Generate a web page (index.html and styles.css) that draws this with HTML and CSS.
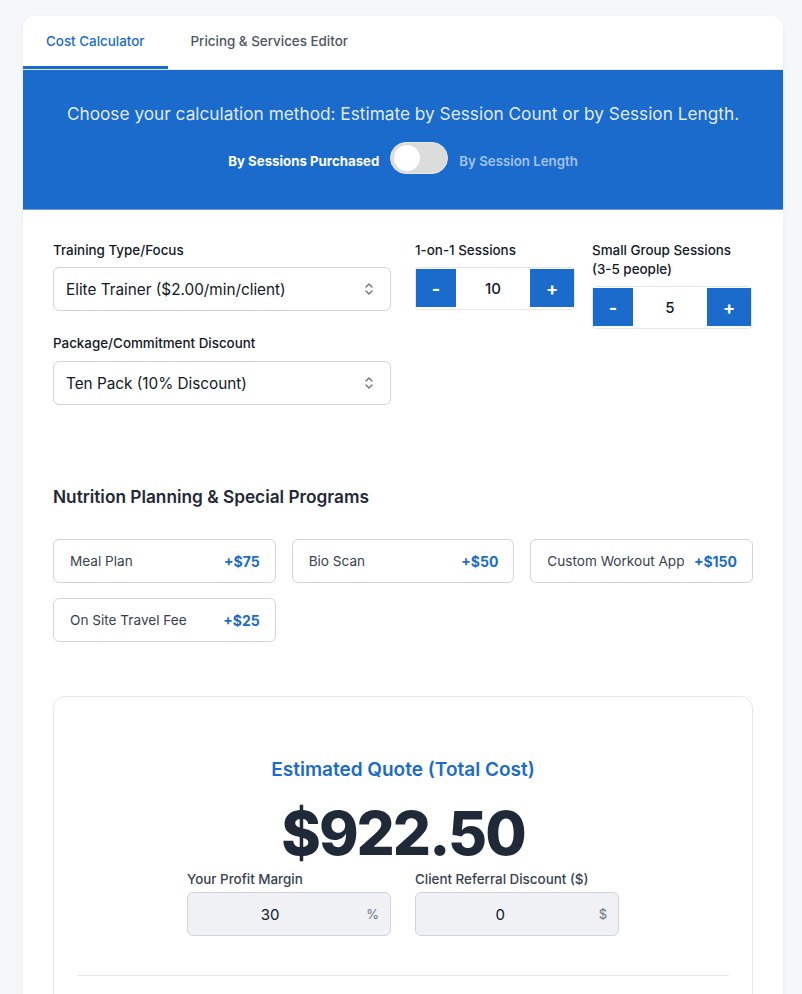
FILE: index.html
```html
<!DOCTYPE html>
<html lang="en">
<head>
    <meta charset="UTF-8">
    <meta name="viewport" content="width=device-width, initial-scale=1.0">
    <title>Cost Calculator</title>
    <link rel="stylesheet" href="styles.css">
</head>
<body>
    <div class="card">
        <!-- tabs -->
        <div class="tabs">
            <button class="tab active">Cost Calculator</button>
            <button class="tab">Pricing &amp; Services Editor</button>
        </div>

        <!-- calculation method banner -->
        <div class="banner">
            <p class="banner-text">Choose your calculation method: Estimate by Session Count or by Session Length.</p>
            <div class="mode-row">
                <span class="mode-label on">By Sessions Purchased</span>
                <span class="switch"><span class="knob"></span></span>
                <span class="mode-label">By Session Length</span>
            </div>
        </div>

        <div class="content">
            <div class="form-row">
                <div class="form-col">
                    <div class="field">
                        <label class="field-label">Training Type/Focus</label>
                        <div class="select-wrap">
                            <select class="select">
                                <option>Elite Trainer ($2.00/min/client)</option>
                            </select>
                            <svg class="chevron" width="10" height="14" viewBox="0 0 10 14" fill="none" stroke="#6b7280" stroke-width="1.4" stroke-linecap="round" stroke-linejoin="round"><path d="M2 5 L5 2 L8 5"/><path d="M2 9 L5 12 L8 9"/></svg>
                        </div>
                    </div>
                    <div class="field">
                        <label class="field-label package-label">Package/Commitment Discount</label>
                        <div class="select-wrap">
                            <select class="select">
                                <option>Ten Pack (10% Discount)</option>
                            </select>
                            <svg class="chevron" width="10" height="14" viewBox="0 0 10 14" fill="none" stroke="#6b7280" stroke-width="1.4" stroke-linecap="round" stroke-linejoin="round"><path d="M2 5 L5 2 L8 5"/><path d="M2 9 L5 12 L8 9"/></svg>
                        </div>
                    </div>
                </div>

                <div class="field stepper-field">
                    <label class="field-label">1-on-1 Sessions</label>
                    <div class="stepper">
                        <button class="step-btn">-</button>
                        <span class="step-value">10</span>
                        <button class="step-btn plus">+</button>
                    </div>
                </div>

                <div class="field stepper-field group-field">
                    <label class="field-label">Small Group Sessions<br>(3-5 people)</label>
                    <div class="stepper">
                        <button class="step-btn">-</button>
                        <span class="step-value">5</span>
                        <button class="step-btn plus">+</button>
                    </div>
                </div>
            </div>

            <h2 class="section-title">Nutrition Planning &amp; Special Programs</h2>

            <div class="addons">
                <div class="addon"><span>Meal Plan</span><span class="addon-price">+$75</span></div>
                <div class="addon"><span>Bio Scan</span><span class="addon-price">+$50</span></div>
                <div class="addon"><span>Custom Workout App</span><span class="addon-price">+$150</span></div>
                <div class="addon"><span>On Site Travel Fee</span><span class="addon-price">+$25</span></div>
            </div>

            <!-- quote result -->
            <div class="quote">
                <h3 class="quote-title">Estimated Quote (Total Cost)</h3>
                <div class="quote-total">$922.50</div>
                <div class="quote-inputs">
                    <div class="quote-field">
                        <label class="quote-label">Your Profit Margin</label>
                        <div class="suffix-input">
                            <span class="suffix-value">30</span>
                            <span class="suffix">%</span>
                        </div>
                    </div>
                    <div class="quote-field">
                        <label class="quote-label">Client Referral Discount ($)</label>
                        <div class="suffix-input">
                            <span class="suffix-value">0</span>
                            <span class="suffix">$</span>
                        </div>
                    </div>
                </div>
                <hr class="divider">
                <div class="breakdown">
                    <div class="breakdown-row"><span>1-on-1 Sessions (10)</span><span>$600.00</span></div>
                    <div class="breakdown-row"><span>Small Group Sessions (5)</span><span>$150.00</span></div>
                </div>
            </div>
        </div>
    </div>
</body>
</html>
```

FILE: styles.css
```css
* {
    margin: 0;
    padding: 0;
    box-sizing: border-box;
}

body {
    background: #f6f7fa;
    font-family: 'Inter', 'Liberation Sans', sans-serif;
    color: #111827;
    padding: 16px 19px 40px 23px;
}

.card {
    width: 760px;
    background: #fff;
    border-radius: 12px;
    overflow: hidden;
    box-shadow: 0 1px 3px rgba(0, 0, 0, 0.06);
}

/* tabs */
.tabs {
    display: flex;
    border-bottom: 1px solid #e5e7eb;
}

.tab {
    height: 53px;
    padding: 0 23px;
    border: none;
    border-bottom: 3px solid transparent;
    background: none;
    font-family: inherit;
    font-size: 13.4px;
    font-weight: 500;
    color: #4b5563;
}

.tab.active {
    color: #1a6bcc;
    border-bottom-color: #1a6bcc;
}

/* banner */
.banner {
    background: #1a6bcc;
    border-bottom: 1px solid #6d9fe0;
    padding: 32px 20px 35px;
    text-align: center;
}

.banner-text {
    font-size: 17.25px;
    line-height: 24px;
    color: rgba(255, 255, 255, 0.88);
}

.mode-row {
    margin-top: 16px;
    display: flex;
    justify-content: center;
    align-items: center;
    gap: 11px;
}

.mode-label {
    padding-top: 5px;
    font-size: 13.25px;
    font-weight: 600;
    color: rgba(255, 255, 255, 0.6);
}

.mode-label.on {
    color: #fff;
    font-weight: 700;
}

.switch {
    width: 58px;
    height: 32px;
    border-radius: 16px;
    background: #dcdcdc;
    border: 1px solid #e8e8e8;
    display: flex;
    align-items: center;
    padding-left: 3px;
}

.knob {
    width: 26px;
    height: 26px;
    border-radius: 50%;
    background: #fff;
}

/* form */
.content {
    padding: 31px 30px 40px;
}

.form-row {
    display: flex;
    align-items: flex-start;
}

.form-col {
    width: 338px;
    display: flex;
    flex-direction: column;
    gap: 23px;
}

.stepper-field {
    width: 160px;
    margin-left: 24px;
}

.group-field {
    margin-left: 17px;
}

.field-label {
    display: block;
    font-size: 13.4px;
    font-weight: 500;
    line-height: 19px;
    margin-bottom: 7px;
    color: #111827;
}

.package-label {
    margin-bottom: 8px;
}

.select-wrap {
    position: relative;
}

.select {
    width: 100%;
    height: 44px;
    appearance: none;
    -webkit-appearance: none;
    border: 1px solid #d1d5db;
    border-radius: 6px;
    background: #fff;
    padding: 0 36px 0 12px;
    font-family: inherit;
    font-size: 15.3px;
    color: #111827;
}

.chevron {
    position: absolute;
    right: 17px;
    top: 15px;
}

.stepper {
    width: 160px;
    height: 43px;
    display: flex;
    border: 1px solid #e5e7eb;
    border-radius: 4px;
    padding: 1px 0 2px;
}

.step-btn {
    width: 40px;
    border: none;
    background: #1a6bcc;
    color: #fff;
    font-family: inherit;
    font-size: 18px;
    font-weight: 700;
}

.step-btn.plus {
    width: 44px;
}

.step-value {
    flex: 1;
    display: flex;
    align-items: center;
    justify-content: center;
    font-size: 15px;
    font-weight: 500;
}

/* add-ons */
.section-title {
    margin-top: 80px;
    font-size: 17.25px;
    font-weight: 600;
    line-height: 24px;
    color: #1f2937;
}

.addons {
    margin-top: 30px;
    display: grid;
    grid-template-columns: repeat(3, 1fr);
    column-gap: 16px;
    row-gap: 15px;
}

.addon {
    height: 44px;
    border: 1px solid #d1d5db;
    border-radius: 6px;
    padding: 0 15px 0 16px;
    display: flex;
    align-items: center;
    justify-content: space-between;
    font-size: 13.6px;
    color: #374151;
}

.addon-price {
    font-size: 14px;
    font-weight: 700;
    color: #1a6bcc;
}

/* quote */
.quote {
    margin-top: 54px;
    border: 1px solid #e5e7eb;
    border-radius: 12px;
    padding: 60px 23px 30px;
    text-align: center;
}

.quote-title {
    font-size: 19px;
    font-weight: 600;
    line-height: 26px;
    color: #1a6bcc;
}

.quote-total {
    margin-top: 20px;
    font-size: 60px;
    font-weight: 800;
    line-height: 60px;
    letter-spacing: -2px;
    color: #1f2937;
}

.quote-inputs {
    margin-top: 7px;
    display: flex;
    justify-content: center;
    gap: 24px;
}

.quote-field {
    width: 204px;
    text-align: left;
}

.quote-label {
    display: block;
    font-size: 13.4px;
    font-weight: 500;
    line-height: 18px;
    margin-bottom: 4px;
    color: #374151;
}

.suffix-input {
    height: 44px;
    background: #eff1f5;
    border: 1px solid #d1d5db;
    border-radius: 6px;
    display: flex;
    align-items: center;
    padding: 0 11px 0 0;
}

.suffix-value {
    flex: 1;
    text-align: center;
    font-size: 15px;
    color: #111827;
}

.suffix {
    font-size: 13px;
    color: #6b7280;
    margin-left: 14px;
}

.divider {
    margin-top: 39px;
    border: none;
    border-top: 1px solid #e5e7eb;
}

.breakdown {
    margin-top: 20px;
}

.breakdown-row {
    display: flex;
    justify-content: space-between;
    font-size: 14px;
    color: #374151;
    padding: 6px 0;
}
```
